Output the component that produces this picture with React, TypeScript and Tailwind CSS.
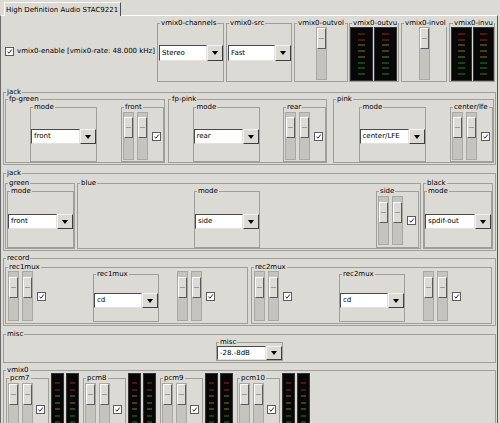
import React from "react";

type Kids = { children?: React.ReactNode };

const LEDS = [
  "bg-[#521313]",
  "bg-[#521313]",
  "bg-[#424113]",
  "bg-[#424113]",
  "bg-[#424113]",
  "bg-[#144314]",
  "bg-[#144314]",
  "bg-[#144314]",
];

function Frame({ label, className = "", children }: { label: string; className?: string } & Kids) {
  return (
    <fieldset className={`shrink-0 min-w-0 border border-[#a09e99] ${className}`}>
      <legend className="ml-[2px] px-[1px] text-[7px] leading-[7px] whitespace-nowrap">{label}</legend>
      {children}
    </fieldset>
  );
}

function Check({ className = "" }: { className?: string }) {
  return (
    <div className={`w-[9px] h-[9px] shrink-0 bg-white border border-[#5c5c5c] flex items-center justify-center ${className}`}>
      <svg width="7" height="7" viewBox="0 0 7 7">
        <path d="M1.5 3.8 3 5.2 5.8 1.5" fill="none" stroke="#2a2a2a" strokeWidth="1" />
      </svg>
    </div>
  );
}

function Slider({ className }: { className: string }) {
  return (
    <div className={`w-[11px] shrink-0 bg-[#c5c3be] border border-[#a9a7a2] ${className}`}>
      <div className="h-[21px] bg-[#dddbd6] border border-t-white border-l-white border-r-[#5b5b5b] border-b-[#5b5b5b] flex items-center justify-center">
        <div className="w-[5px] h-px bg-[#9c9a95]" />
      </div>
    </div>
  );
}

function SliderPair({
  slider,
  className = "",
  gap = "ml-[3px]",
  checkGap = "ml-[4px]",
}: {
  slider: string;
  className?: string;
  gap?: string;
  checkGap?: string;
}) {
  return (
    <div className={`flex items-center shrink-0 ${className}`}>
      <Slider className={slider} />
      <Slider className={`${gap} ${slider}`} />
      <Check className={checkGap} />
    </div>
  );
}

function Meter({ className, led }: { className: string; led: string }) {
  return (
    <div className={`shrink-0 bg-[#070707] border border-[#333] flex flex-col items-center justify-between ${className}`}>
      {LEDS.map((c, i) => (
        <div key={i} className={`h-[2px] ${led} ${c}`} />
      ))}
    </div>
  );
}

function Combo({ value, className = "h-[15px]" }: { value: string; className?: string }) {
  return (
    <div className={`flex w-full ${className}`}>
      <div className="flex-1 min-w-0 flex items-center pl-[2px] bg-white border border-t-[#4a4a4a] border-l-[#4a4a4a] border-r-[#e4e2de] border-b-[#e4e2de] whitespace-nowrap overflow-hidden leading-none">
        {value}
      </div>
      <div className="w-[16px] shrink-0 flex items-center justify-center bg-[#dcdad5] border border-t-[#f4f3f1] border-l-[#f4f3f1] border-r-[#3e3e3e] border-b-[#3e3e3e]">
        <div className="w-0 h-0 border-l-[3px] border-r-[3px] border-t-[4px] border-l-transparent border-r-transparent border-t-black" />
      </div>
    </div>
  );
}

/* one jack: mode combo centred, slider pair at the right */
function JackSub({ label, mode, jack, className }: { label: string; mode: string; jack: string; className: string }) {
  return (
    <Frame label={label} className={`h-[67px] flex items-start ${className}`}>
      <div className="flex-1 flex justify-center">
        <Frame label="mode" className="w-[67px] h-[58px] mt-[1px]">
          <div className="mt-[18px]">
            <Combo value={mode} />
          </div>
        </Frame>
      </div>
      <Frame label={jack} className="w-[43px] h-[58px] mt-[1px]">
        <SliderPair className="ml-[1px] mt-[1px]" slider="h-[48px] pt-[4px]" />
      </Frame>
    </Frame>
  );
}

function RecMux({ label, className }: { label: string; className: string }) {
  return (
    <Frame label={label} className={`h-[60px] flex items-start ${className}`}>
      <SliderPair className="ml-[2px]" slider="h-[50px] pt-[5px]" />
      <Frame label={label} className="w-[66px] h-[51px] ml-[47px]">
        <div className="mt-[15px]">
          <Combo value="cd" />
        </div>
      </Frame>
      <SliderPair className="ml-[18px]" slider="h-[50px] pt-[5px]" />
    </Frame>
  );
}

function Pcm({ label, first }: { label: string; first?: boolean }) {
  return (
    <div className={`flex items-start shrink-0 ${first ? "ml-[2px]" : "ml-[4px]"}`}>
      <Frame label={label} className="w-[43px] h-[100px] mt-[1px]">
        <SliderPair className="ml-[1px] mt-[1px]" slider="h-[52px]" checkGap="ml-[3px]" />
      </Frame>
      <Meter className="ml-[2px] -mt-[1px] w-[13px] h-[64px] pt-[8px] pb-[6px]" led="w-[5px]" />
      <Meter className="ml-[2px] -mt-[1px] w-[13px] h-[64px] pt-[8px] pb-[6px]" led="w-[5px]" />
    </div>
  );
}

export default function App() {
  return (
    <div className="w-[500px] h-[423px] overflow-hidden bg-[#dcdad5] text-black text-[7px] font-['DejaVu_Sans',sans-serif]">
      {/* tab strip */}
      <div className="h-[15px] pl-[4px] pt-[2px] flex items-start">
        <div className="relative z-10 h-[14px] pl-[1px] pr-[2px] flex items-center bg-[#dcdad5] border-t border-l border-r border-t-white border-l-white border-r-[#4e4e4e] leading-[12px] whitespace-nowrap">
          High Definition Audio STAC9221
        </div>
      </div>

      {/* notebook page */}
      <div className="w-[498px] h-[408px] overflow-hidden flex flex-col items-start border-t border-l border-r border-t-white border-l-[#6a6a6a] border-r-[#5a5a5a]">
        {/* vmix0 row */}
        <div className="flex items-start mt-[4px]">
          <div className="w-[156px] h-[62px] pl-[4px] flex items-center">
            <Check />
            <span className="ml-[3px] whitespace-nowrap">vmix0-enable [vmix0-rate: 48.000 kHz]</span>
          </div>
          <Frame label="vmix0-channels" className="w-[67px] h-[62px]">
            <div className="mt-[18px] pl-[1px]">
              <Combo value="Stereo" className="h-[16px]" />
            </div>
          </Frame>
          <Frame label="vmix0-src" className="w-[66px] h-[62px] ml-[2px]">
            <div className="mt-[18px] pl-[1px]">
              <Combo value="Fast" className="h-[16px]" />
            </div>
          </Frame>
          <Frame label="vmix0-outvol" className="w-[54px] h-[62px] ml-[2px] flex justify-center items-start">
            <Slider className="h-[53px]" />
          </Frame>
          <Frame label="vmix0-outvu" className="w-[50px] h-[62px] ml-[1px] flex items-start gap-[1px]">
            <Meter className="w-[23px] h-[54px] pt-[5px] pb-[5px]" led="w-[7px]" />
            <Meter className="w-[23px] h-[54px] pt-[5px] pb-[5px]" led="w-[7px]" />
          </Frame>
          <Frame label="vmix0-invol" className="w-[46px] h-[62px] ml-[2px] flex justify-center items-start">
            <Slider className="h-[53px]" />
          </Frame>
          <Frame label="vmix0-invu" className="w-[46px] h-[62px] ml-[2px] flex items-start gap-[1px] pl-[1px]">
            <Meter className="w-[21px] h-[54px] pt-[5px] pb-[5px]" led="w-[7px]" />
            <Meter className="w-[21px] h-[54px] pt-[5px] pb-[5px]" led="w-[7px]" />
          </Frame>
        </div>

        {/* jack: front panel */}
        <Frame label="jack" className="w-[493px] h-[76px] ml-[2px] mt-[7px] flex items-start">
          <JackSub label="fp-green" mode="front" jack="front" className="w-[160px] ml-[1px]" />
          <JackSub label="fp-pink" mode="rear" jack="rear" className="w-[159px] ml-[3px]" />
          <JackSub label="pink" mode="center/LFE" jack="center/lfe" className="w-[161px] ml-[6px]" />
        </Frame>

        {/* jack: rear panel */}
        <Frame label="jack" className="w-[493px] h-[81px] ml-[2px] mt-[5px] flex items-start">
          <Frame label="green" className="w-[70px] h-[69px] ml-[1px] mt-[3px]">
            <Frame label="mode" className="w-[67px] h-[60px] ml-[1px] mt-[1px]">
              <div className="mt-[19px]">
                <Combo value="front" />
              </div>
            </Frame>
          </Frame>
          <Frame label="blue" className="w-[344px] h-[69px] ml-[2px] mt-[3px] flex items-start">
            <div className="flex-1 flex justify-center">
              <Frame label="mode" className="w-[66px] h-[60px] mt-[1px]">
                <div className="mt-[19px]">
                  <Combo value="side" />
                </div>
              </Frame>
            </div>
            <Frame label="side" className="w-[43px] h-[60px] mt-[1px] mr-[1px]">
              <SliderPair className="ml-[1px] mt-[1px]" slider="h-[49px] pt-[5px]" />
            </Frame>
          </Frame>
          <Frame label="black" className="w-[70px] h-[69px] ml-[2px] mt-[3px]">
            <Frame label="mode" className="w-[68px] h-[60px] mt-[1px]">
              <div className="mt-[19px]">
                <Combo value="spdif-out" />
              </div>
            </Frame>
          </Frame>
        </Frame>

        {/* record */}
        <Frame label="record" className="w-[493px] h-[71px] ml-[2px] mt-[4px] flex items-start">
          <RecMux label="rec1mux" className="w-[243px] ml-[1px] mt-[2px]" />
          <RecMux label="rec2mux" className="w-[241px] ml-[3px] mt-[2px]" />
        </Frame>

        {/* misc */}
        <Frame label="misc" className="w-[493px] h-[32px] ml-[2px] mt-[5px] flex justify-center items-start">
          <Frame label="misc" className="w-[67px] h-[22px] mt-[1px]">
            <Combo value="-28.-8dB" className="h-[14px]" />
          </Frame>
        </Frame>

        {/* vmix0 channels */}
        <Frame label="vmix0" className="w-[493px] h-[80px] ml-[2px] mt-[4px] flex items-start">
          <Pcm label="pcm7" first />
          <Pcm label="pcm8" />
          <Pcm label="pcm9" />
          <Pcm label="pcm10" />
        </Frame>
      </div>
    </div>
  );
}
